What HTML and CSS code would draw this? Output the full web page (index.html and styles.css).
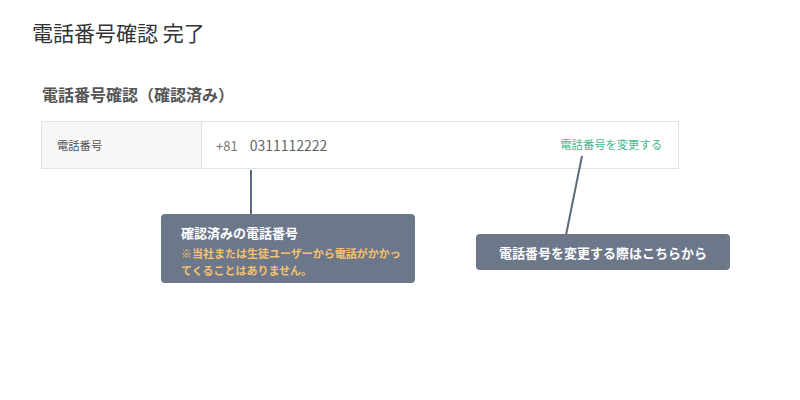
FILE: index.html
```html
<!DOCTYPE html>
<html lang="ja">
<head>
    <meta charset="UTF-8">
    <meta name="viewport" content="width=device-width, initial-scale=1.0">
    <title>電話番号確認 完了</title>
    <link rel="stylesheet" href="styles.css">
</head>
<body>

    <div class="page">
        <h1 class="page-title">電話番号確認 完了</h1>

        <!-- Verified phone section -->
        <section class="phone-section">
            <h2 class="section-title">電話番号確認（確認済み）</h2>

            <div class="annotated">
                <div class="phone-table">
                    <div class="phone-label">電話番号</div>
                    <div class="phone-value">
                        <span class="country-code">+81</span>
                        <span class="phone-number">0311112222</span>
                        <a href="#" class="change-link">電話番号を変更する</a>
                    </div>
                </div>

                <!-- Annotation lines -->
                <svg class="pointer-lines" width="700" height="170" viewBox="0 0 700 170">
                    <line x1="210" y1="49" x2="210" y2="94" />
                    <line x1="541" y1="35" x2="525" y2="114" />
                </svg>

                <div class="callout callout-verified">
                    <div class="callout-title">確認済みの電話番号</div>
                    <div class="callout-note">※当社または生徒ユーザーから電話がかかってくることはありません。</div>
                </div>

                <div class="callout callout-change">電話番号を変更する際はこちらから</div>
            </div>
        </section>
    </div>

</body>
</html>
```

FILE: styles.css
```css
body {
    margin: 0;
    padding: 0;
    background-color: #ffffff;
    font-family: "Noto Sans CJK JP", "Noto Sans", sans-serif;
    color: #333;
}

.page {
    padding: 17px 0 0 32px;
}

.page-title {
    margin: 0;
    font-size: 21px;
    font-weight: 400;
    line-height: 30px;
    color: #333;
}

.phone-section {
    margin-left: 9px;
}

.section-title {
    margin: 35px 0 0 1px;
    font-size: 16px;
    font-weight: 700;
    line-height: 24px;
    color: #555;
}

/* Table + annotations around it */
.annotated {
    position: relative;
    margin-top: 15px;
    width: 700px;
    height: 170px;
}

.phone-table {
    display: flex;
    width: 636px;
    height: 46px;
    border: 1px solid #e2e2e2;
}

.phone-label {
    width: 144px;
    padding-left: 15px;
    display: flex;
    align-items: center;
    background-color: #f7f7f7;
    border-right: 1px solid #e2e2e2;
    font-size: 11.3px;
    color: #555;
}

.phone-value {
    flex: 1;
    display: flex;
    align-items: center;
    padding: 0 16px 0 14px;
}

.country-code {
    font-size: 13px;
    color: #777;
}

.phone-number {
    margin-left: 12px;
    font-size: 14px;
    color: #666;
}

.change-link {
    margin-left: auto;
    margin-top: -3px;
    font-size: 11.3px;
    color: #45b98d;
    text-decoration: none;
}

.pointer-lines {
    position: absolute;
    left: 0;
    top: 0;
    pointer-events: none;
}

.pointer-lines line {
    stroke: #5e6a7e;
    stroke-width: 2;
}

/* Dark annotation boxes */
.callout {
    position: absolute;
    box-sizing: border-box;
    width: 254px;
    background-color: #6c778a;
    border-radius: 4px;
    color: #fff;
    font-weight: 700;
}

.callout-verified {
    left: 120px;
    top: 93px;
    height: 69px;
    padding: 10px 12px 0 20px;
}

.callout-title {
    font-size: 13px;
    line-height: 18px;
}

.callout-note {
    margin-top: 3px;
    font-size: 11px;
    line-height: 17px;
    color: #f6c270;
}

.callout-change {
    left: 435px;
    top: 113px;
    height: 36px;
    display: flex;
    align-items: center;
    justify-content: center;
    font-size: 13px;
}
```
